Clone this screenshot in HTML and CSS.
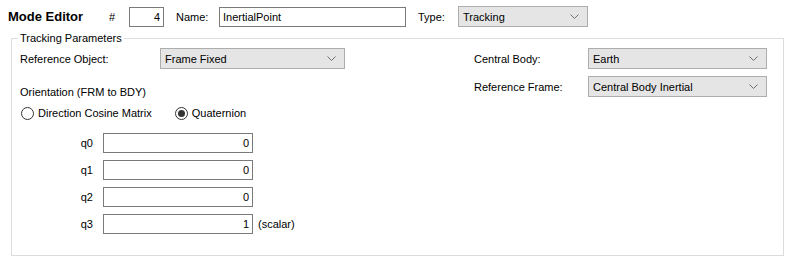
FILE: index.html
```html
<!DOCTYPE html>
<html lang="en">
<head>
  <meta charset="UTF-8" />
  <title>Mode Editor</title>
  <link rel="stylesheet" href="styles.css">
</head>
<body>
  <div class="otsikko-rivi">
    <span class="otsikko">Mode Editor</span>
    <span class="risuaita">#</span>
    <input class="teksti numero-kentta" type="text" value="4" />
    <label class="nimi-label">Name:</label>
    <input class="teksti nimi-kentta" type="text" value="InertialPoint" />
    <label class="tyyppi-label">Type:</label>
    <div class="combo tyyppi-combo">
      <span>Tracking</span>
      <svg width="9" height="5" viewBox="0 0 9 5"><path d="M0.5 0.5 L4.5 4.5 L8.5 0.5" /></svg>
    </div>
  </div>

  <fieldset class="ryhma">
    <legend>Tracking Parameters</legend>
    <div class="sarakkeet">
      <div class="vasen">
        <div class="rivi">
          <label class="kentta-label">Reference Object:</label>
          <div class="combo ref-combo">
            <span>Frame Fixed</span>
            <svg width="9" height="5" viewBox="0 0 9 5"><path d="M0.5 0.5 L4.5 4.5 L8.5 0.5" /></svg>
          </div>
        </div>

        <div class="orientaatio">Orientation (FRM to BDY)</div>

        <div class="radiot">
          <label class="radio"><input type="radio" name="tapa" />Direction Cosine Matrix</label>
          <label class="radio"><input type="radio" name="tapa" checked />Quaternion</label>
        </div>

        <div class="q-lista">
          <div class="q-rivi"><label>q0</label><input class="teksti q-kentta" type="text" value="0" /></div>
          <div class="q-rivi"><label>q1</label><input class="teksti q-kentta" type="text" value="0" /></div>
          <div class="q-rivi"><label>q2</label><input class="teksti q-kentta" type="text" value="0" /></div>
          <div class="q-rivi"><label>q3</label><input class="teksti q-kentta" type="text" value="1" /><span class="skalaari">(scalar)</span></div>
        </div>
      </div>

      <div class="oikea">
        <div class="rivi">
          <label class="oikea-label">Central Body:</label>
          <div class="combo oikea-combo">
            <span>Earth</span>
            <svg width="9" height="5" viewBox="0 0 9 5"><path d="M0.5 0.5 L4.5 4.5 L8.5 0.5" /></svg>
          </div>
        </div>
        <div class="rivi">
          <label class="oikea-label">Reference Frame:</label>
          <div class="combo oikea-combo">
            <span>Central Body Inertial</span>
            <svg width="9" height="5" viewBox="0 0 9 5"><path d="M0.5 0.5 L4.5 4.5 L8.5 0.5" /></svg>
          </div>
        </div>
      </div>
    </div>
  </fieldset>
</body>
</html>
```

FILE: styles.css
```css
body {
  margin: 0;
  background-color: #ffffff;
  color: #000000;
  font-family: "Liberation Sans", Arial, sans-serif;
  font-size: 11px;
}

/* Yläpalkki */
.otsikko-rivi {
  display: flex;
  align-items: center;
  height: 21px;
  padding: 6px 0 0 8px;
}

.otsikko {
  width: 101px;
  font-size: 13px;
  font-weight: bold;
}

.risuaita {
  width: 20px;
}

.teksti {
  box-sizing: border-box;
  height: 20px;
  margin: 0;
  padding: 0 3px;
  border: 1px solid #7a7a7a;
  background-color: #ffffff;
  font-family: inherit;
  font-size: 11px;
  color: #000000;
  outline: none;
}

.numero-kentta {
  width: 35px;
  text-align: right;
}

.nimi-label {
  width: 43px;
  margin-left: 12px;
}

.nimi-kentta {
  width: 187px;
}

.tyyppi-label {
  width: 40px;
  margin-left: 12px;
}

/* Pudotusvalikot */
.combo {
  box-sizing: border-box;
  height: 21px;
  display: flex;
  align-items: center;
  justify-content: space-between;
  padding: 0 8px 0 4px;
  background-color: #e5e5e5;
  border: 1px solid #adadad;
}

.combo svg path {
  fill: none;
  stroke: #707070;
  stroke-width: 1;
}

.tyyppi-combo {
  width: 130px;
}

.ref-combo {
  width: 185px;
}

.oikea-combo {
  width: 179px;
}

/* Ryhmälaatikko */
.ryhma {
  box-sizing: border-box;
  width: 773px;
  margin: 4px 0 0 11px;
  padding: 3px 16px 21px 8px;
  border: 1px solid #dcdcdc;
}

.ryhma legend {
  margin-left: -2px;
  padding: 0 2px;
  line-height: 14px;
}

.sarakkeet {
  display: flex;
}

.vasen {
  width: 454px;
}

.oikea {
  display: flex;
  flex-direction: column;
  gap: 7px;
}

.rivi {
  display: flex;
  align-items: center;
}

.kentta-label {
  width: 140px;
}

.oikea-label {
  width: 114px;
}

.orientaatio {
  margin-top: 17px;
  line-height: 13px;
}

.radiot {
  display: flex;
  align-items: center;
  height: 14px;
  margin-top: 7px;
}

.radio {
  display: flex;
  align-items: center;
  margin-right: 22px;
}

.radio input {
  appearance: none;
  box-sizing: border-box;
  width: 13px;
  height: 13px;
  margin: 0 4px 0 1px;
  border: 1px solid #333333;
  border-radius: 50%;
  background-color: #ffffff;
  position: relative;
}

.radio input:checked::after {
  content: "";
  position: absolute;
  top: 2px;
  left: 2px;
  width: 7px;
  height: 7px;
  border-radius: 50%;
  background-color: #333333;
}

/* Kvaternion kentät */
.q-lista {
  display: flex;
  flex-direction: column;
  gap: 7px;
  margin-top: 13px;
}

.q-rivi {
  display: flex;
  align-items: center;
}

.q-rivi label {
  box-sizing: border-box;
  width: 83px;
  padding-right: 10px;
  text-align: right;
}

.q-kentta {
  width: 150px;
  text-align: right;
}

.skalaari {
  margin-left: 5px;
}
```
